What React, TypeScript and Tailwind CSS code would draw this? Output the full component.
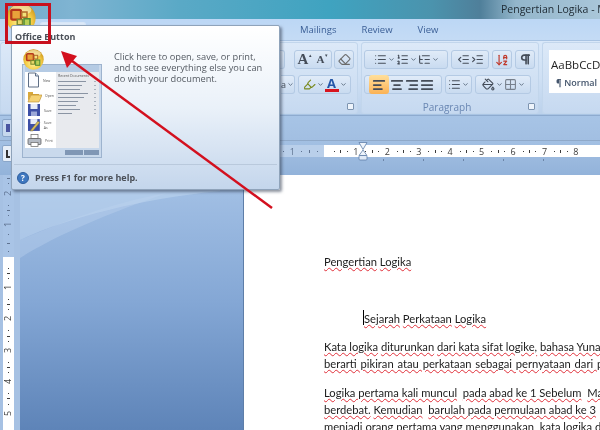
import {
  AlignCenter,
  AlignJustify,
  AlignLeft,
  AlignRight,
  ArrowDownAZ,
  ChevronDown,
  Eraser,
  Grid2x2,
  Highlighter,
  IndentDecrease,
  IndentIncrease,
  List,
  ListOrdered,
  ListTree,
  PaintBucket,
  Pilcrow,
} from "lucide-react";
import type { ReactNode } from "react";

const ui = "font-['Open_Sans',sans-serif]";

function Orb({ size }: { size: number }) {
  return (
    <svg width={size} height={size} viewBox="0 0 40 40">
      <defs>
        <radialGradient id="orbGold" cx="50%" cy="65%" r="65%">
          <stop offset="0%" stopColor="#fff7a8" />
          <stop offset="55%" stopColor="#f6cf4a" />
          <stop offset="100%" stopColor="#c98f14" />
        </radialGradient>
      </defs>
      <circle cx="20" cy="20" r="19.5" fill="url(#orbGold)" />
      <ellipse cx="20" cy="9" rx="14" ry="7" fill="#fffbe0" opacity="0.55" />
      <rect x="7" y="9" width="13" height="13" rx="2" fill="#e8a33a" stroke="#b5371c" strokeWidth="3" />
      <rect x="21" y="12" width="7" height="7" fill="#f3e27a" stroke="#b26a2a" strokeWidth="2" />
      <rect x="15" y="22" width="7" height="7" fill="#e9d76a" stroke="#7d8a2c" strokeWidth="2" />
      <rect x="24" y="21" width="8" height="10" fill="#b9cf55" stroke="#4f8a34" strokeWidth="2" />
    </svg>
  );
}

function Btn({ children, className = "" }: { children?: ReactNode; className?: string }) {
  return (
    <div
      className={`flex h-[19px] items-center justify-center gap-px rounded-[3px] border border-[#b4cae4] bg-gradient-to-b from-[#e0ebf8] to-[#c9dbf0] text-[#444c58] ${className}`}
    >
      {children}
    </div>
  );
}

function Caret() {
  return <ChevronDown size={7} strokeWidth={3} className="text-[#5a6a7e]" />;
}

function Launcher() {
  return <div className="h-[7px] w-[7px] rounded-[1px] border border-[#7d94b0] bg-[#eef4fb]" />;
}

function RulerUnit({ digit, muted }: { digit: number; muted?: boolean }) {
  return (
    <div
      className={`flex w-[31.45px] shrink-0 items-center justify-between pl-[7px] text-[9px] leading-none ${
        muted ? "text-[#5f7391]" : "text-[#3c3c3c]"
      }`}
    >
      <span className="h-px w-px bg-current" />
      <span className="h-[3px] w-px bg-current" />
      <span className="h-px w-px bg-current" />
      <span>{digit}</span>
    </div>
  );
}

function VRulerUnit({ digit, muted }: { digit: number; muted?: boolean }) {
  return (
    <div
      className={`flex h-[31.45px] shrink-0 flex-col items-center justify-between pt-[7px] text-[9px] leading-none ${
        muted ? "text-[#5f7391]" : "text-[#3c3c3c]"
      }`}
    >
      <span className="h-px w-px bg-current" />
      <span className="h-px w-[3px] bg-current" />
      <span className="h-px w-px bg-current" />
      <span className="-rotate-90">{digit}</span>
    </div>
  );
}

function Thumb() {
  const items: [string, ReactNode][] = [
    [
      "New",
      <svg key="n" width="13" height="16" viewBox="0 0 13 16">
        <path d="M1.5 1h7l3 3v11h-10z" fill="#fbfcff" stroke="#5f6f86" />
        <path d="M8.5 1v3h3" fill="#d7e1ef" stroke="#5f6f86" />
      </svg>,
    ],
    [
      "Open",
      <svg key="o" width="15" height="14" viewBox="0 0 15 14">
        <path d="M1 3h5l1 1h5v2H4L1 12z" fill="#d9a93c" />
        <path d="M4 6h11l-3 7H1z" fill="#f5d274" stroke="#b98a2a" strokeWidth="0.6" />
        <path d="M6 1h6v4H6z" fill="#ffffff" />
      </svg>,
    ],
    [
      "Save",
      <svg key="s" width="14" height="14" viewBox="0 0 14 14">
        <rect x="1" y="1" width="12" height="12" fill="#3d4fa6" />
        <rect x="3.5" y="1" width="7" height="5" fill="#e7ecf8" />
        <rect x="4" y="8.5" width="6" height="4.5" fill="#9ca8d8" />
      </svg>,
    ],
    [
      "Save As",
      <svg key="a" width="14" height="14" viewBox="0 0 14 14">
        <rect x="1" y="1" width="12" height="12" fill="#3d4fa6" />
        <rect x="3.5" y="1" width="7" height="5" fill="#e7ecf8" />
        <path d="M3 13 11 3l2 1.5L6 13z" fill="#d9bd55" stroke="#5c5c5c" strokeWidth="0.5" />
      </svg>,
    ],
    [
      "Print",
      <svg key="p" width="15" height="15" viewBox="0 0 15 14">
        <rect x="4" y="1" width="7" height="4" fill="#fff" stroke="#666" strokeWidth="0.7" />
        <rect x="1" y="5" width="13" height="6" rx="1" fill="#b5bbc4" stroke="#555" strokeWidth="0.7" />
        <rect x="4" y="9" width="7" height="4" fill="#fff" stroke="#666" strokeWidth="0.7" />
      </svg>,
    ],
  ];
  return (
    <div className="flex h-[94px] w-[80px] flex-col border border-[#9db3ce] bg-[#c9d9ec] px-[2px] pb-[2px]">
      <div className="h-[7px] shrink-0 bg-[#b5cbe4]" />
      <div className="flex flex-1 bg-white">
        <div className="flex w-[31px] flex-col justify-around pl-[2px]">
          {items.map(([label, icon]) => (
            <div key={label} className="flex items-center gap-[3px]">
              {icon}
              <span className="text-[3.5px] text-[#555]">{label}</span>
            </div>
          ))}
        </div>
        <div className="flex flex-1 flex-col gap-[2px] bg-[#e8eaee] px-[2px] pt-[2px]">
          <span className="text-[3.5px] leading-[4px] text-[#555]">Recent Documents</span>
          {[36, 32, 30, 38, 34, 28, 26, 30, 22].map((w, i) => (
            <div key={i} className="flex h-[2px] items-center justify-between pr-[1px]">
              <div className="h-px bg-[#8a94a3]" style={{ width: w - 8 }} />
              <div className="h-px w-[2px] bg-[#aab2bd]" />
            </div>
          ))}
        </div>
      </div>
      <div className="mt-[2px] flex h-[5px] shrink-0 justify-end gap-px">
        <div className="w-[18px] bg-[#8097b5]" />
        <div className="w-[15px] bg-[#8097b5]" />
      </div>
    </div>
  );
}

function Spell({ children }: { children: ReactNode }) {
  return (
    <span className="underline decoration-[#e0303a] decoration-wavy decoration-1 underline-offset-1">
      {children}
    </span>
  );
}

export default function App() {
  return (
    <div className={`relative h-[430px] w-[600px] overflow-hidden bg-white blur-[0.35px] ${ui}`}>
      {/* title bar */}
      <div className="flex h-[19px] items-center justify-end bg-[linear-gradient(90deg,#6fa6c9_0%,#7fb4d2_12%,#5aa9c6_30%,#3fa3c0_55%,#4b93ad_72%,#4f7f9a_80%,#93b6cb_86%,#a9c6d9_100%)] text-[10.5px] text-[#1e2a33]">
        <span className="w-[99px] shrink-0 overflow-hidden whitespace-nowrap">Pengertian Logika - Microsoft</span>
      </div>

      {/* tabs */}
      <div className="flex h-[21px] items-end bg-gradient-to-b from-[#bcd7f5] to-[#c4dbf5] pl-[40px] text-[9.5px] leading-none text-[#3b5f96]">
        <div className="h-[18px] w-[46px] rounded-t-[3px] border border-b-0 border-[#d7e6f7] bg-[#dce9f8]" />
        <div className="flex h-full items-center gap-[25px] pl-[214px]">
          <span>Mailings</span>
          <span>Review</span>
          <span>View</span>
        </div>
      </div>

      {/* ribbon */}
      <div className="flex h-[75px] gap-[3px] border-y border-[#a9c4e3] bg-gradient-to-b from-[#d9e8f9] via-[#cfe0f4] to-[#bcd2ec] pt-[1px] text-[#444c58]">
        <div className="flex w-[358px] shrink-0 flex-col rounded-[3px] border border-[#c2d6ec] bg-gradient-to-b from-[#dce9f8] to-[#c6d9f0]">
          <div className="flex h-[55px] flex-col items-end gap-[6px] pt-[7px]">
            <div className="flex items-center gap-[2px] pr-[3px]">
              <Btn className="mr-[7px] w-[5px] rounded-l-none border-l-0 bg-white" />
              <Btn className="w-[38px] gap-[2px]">
                <span className="font-['Liberation_Serif',serif] text-[15px] font-bold leading-none">A</span>
                <span className="-mt-[8px] text-[5px]">▴</span>
                <span className="ml-[3px] font-['Liberation_Serif',serif] text-[11px] font-bold leading-none">A</span>
                <span className="-mt-[8px] text-[5px]">▾</span>
              </Btn>
              <Btn className="w-[20px]">
                <Eraser size={13} className="text-[#6b6b6b]" />
              </Btn>
            </div>
            <div className="flex items-center gap-[3px] pr-[6px]">
              <Btn className="w-[14px] rounded-l-none border-l-0 text-[9px]">
                <span>a</span>
                <Caret />
              </Btn>
              <Btn className="w-[53px] justify-around">
                <Highlighter size={13} className="text-[#7a8a1e]" />
                <Caret />
                <span className="flex flex-col items-center text-[13px] font-bold leading-[12px] text-[#2456a8]">
                  A<span className="h-[3px] w-[14px] bg-[#d8141e]" />
                </span>
                <Caret />
              </Btn>
            </div>
          </div>
          <div className="flex flex-1 items-center justify-end pr-[3px] pt-[2px]">
            <Launcher />
          </div>
        </div>

        <div className="flex w-[178px] shrink-0 flex-col rounded-[3px] border border-[#c2d6ec] bg-gradient-to-b from-[#dce9f8] to-[#c6d9f0]">
          <div className="flex h-[55px] flex-col gap-[6px] pl-[2px] pt-[7px]">
            <div className="flex gap-[3px]">
              <Btn className="w-[84px] justify-around">
                <List size={13} />
                <Caret />
                <ListOrdered size={13} />
                <Caret />
                <ListTree size={13} />
                <Caret />
              </Btn>
              <Btn className="w-[38px] justify-around">
                <IndentDecrease size={13} />
                <IndentIncrease size={13} />
              </Btn>
              <Btn className="w-[20px]">
                <ArrowDownAZ size={14} className="text-[#c0392b]" />
              </Btn>
              <Btn className="w-[20px]">
                <Pilcrow size={13} strokeWidth={3} />
              </Btn>
            </div>
            <div className="flex gap-[3px]">
              <Btn className="w-[78px] justify-between">
                <span className="flex h-[19px] w-[20px] items-center justify-center rounded-[3px] bg-gradient-to-b from-[#ffdf9a] to-[#fbb254]">
                  <AlignLeft size={14} strokeWidth={3} />
                </span>
                <AlignCenter size={14} strokeWidth={3} />
                <AlignRight size={14} strokeWidth={3} />
                <span className="pr-[3px]">
                  <AlignJustify size={14} strokeWidth={3} />
                </span>
              </Btn>
              <Btn className="w-[27px]">
                <List size={13} />
                <Caret />
              </Btn>
              <Btn className="w-[56px] justify-around">
                <PaintBucket size={13} />
                <Caret />
                <Grid2x2 size={13} className="text-[#77808c]" />
                <Caret />
              </Btn>
            </div>
          </div>
          <div className="flex flex-1 items-center pr-[3px] pt-[2px] text-[10px] leading-none text-[#6a87b3]">
            <span className="flex-1 pl-[4px] text-center">Paragraph</span>
            <Launcher />
          </div>
        </div>

        <div className="min-w-0 flex-1 rounded-l-[3px] border border-r-0 border-[#c2d6ec] bg-gradient-to-b from-[#dce9f8] to-[#c6d9f0] pl-[6px] pt-[7px]">
          <div className="h-[43px] overflow-hidden whitespace-nowrap bg-white pl-[2px] pt-[8px] text-[11.5px] leading-[14px] text-[#1f1f1f]">
            AaBbCcDc
            <div className="mt-[5px] pl-[5px] text-[9px] font-semibold leading-[12px] text-[#44556c]">¶ Normal</div>
          </div>
        </div>
      </div>

      {/* strip under ribbon */}
      <div className="flex h-[25px] items-center border-t border-[#8eabcf] bg-gradient-to-b from-[#a7c4e6] to-[#a2bfe2] pl-[2px]">
        <div className="flex h-[18px] w-[12px] items-center justify-center rounded-[2px] border border-[#8aa6c9] bg-[#c6d8ee]">
          <span className="h-[8px] w-[4px] bg-[#4a55a0]" />
        </div>
      </div>

      {/* ruler row */}
      <div className="flex h-[35px] border-t border-[#8fa9c9] bg-gradient-to-b from-[#a3c0e3] to-[#93b3da] pl-[2px] pt-[4px]">
        <div className="flex h-[17px] w-[12px] items-center justify-center rounded-[2px] border border-[#8aa6c9] bg-[#e6eef8]">
          <span className="h-[8px] w-[4px] border-b-2 border-l-2 border-[#333]" />
        </div>
        <div className="ml-[247px] flex min-w-0 flex-1 flex-col">
          <div className="flex h-[12px] overflow-hidden bg-white">
            <div className="flex w-[63px] shrink-0 justify-end bg-[#b9cfea]">
              <RulerUnit digit={1} muted />
              <div className="flex w-[29px] shrink-0 items-center justify-between px-[6px] text-[#5f7391]">
                <span className="h-px w-px bg-current" />
                <span className="h-[3px] w-px bg-current" />
                <span className="h-px w-px bg-current" />
              </div>
            </div>
            <div className="w-[3px] shrink-0" />
            {[1, 2, 3, 4, 5, 6, 7, 8].map((d) => (
              <RulerUnit key={d} digit={d} />
            ))}
          </div>
          <div className="flex gap-[39px] pl-[122px] pt-[2px]">
            {[0, 1, 2, 3, 4].map((i) => (
              <span key={i} className="h-[2px] w-px shrink-0 bg-[#6b84a6]" />
            ))}
          </div>
        </div>
      </div>

      {/* work area */}
      <div className="flex h-[255px]">
        <div className="flex w-[20px] shrink-0 justify-center bg-[#a6c1e3] pr-[4px]">
          <div className="flex h-[255px] w-[11px] flex-col overflow-hidden bg-white">
            <div className="flex h-[82px] shrink-0 flex-col justify-end bg-[#a9c4e6]">
              <VRulerUnit digit={2} muted />
              <VRulerUnit digit={1} muted />
              <div className="flex h-[28px] shrink-0 flex-col items-center justify-between py-[5px] text-[#5f7391]">
                <span className="h-px w-px bg-current" />
                <span className="h-px w-[3px] bg-current" />
                <span className="h-px w-px bg-current" />
              </div>
            </div>
            <div className="h-[3.5px] shrink-0" />
            {[1, 2, 3, 4, 5].map((d) => (
              <VRulerUnit key={d} digit={d} />
            ))}
          </div>
        </div>

        <div className="relative w-[224px] shrink-0 border-r border-[#5e7ea8] bg-gradient-to-b from-[#a5c2e6] via-[#84a7d5] to-[#5e84b8]">
          <svg className="absolute left-0 top-0 h-[90px] w-[200px]" viewBox="0 0 200 90">
            <path d="M0 83C40 58 90 38 147 18 90 28 40 48 0 65Z" fill="#c3d8f0" opacity="0.35" />
            <path d="M0 0h200v16C120 24 50 42 0 65Z" fill="#bcd3ee" opacity="0.6" />
          </svg>
        </div>

        <div className="min-w-0 flex-1 overflow-hidden whitespace-nowrap bg-white pl-[80px] pt-[78px] font-['Lato',sans-serif] text-[11.2px] leading-[17px] text-[#1c1c1c]">
          <p>
            <Spell>Pengertian</Spell> <Spell>Logika</Spell>
          </p>
          <p className="relative mt-[40px] pl-[40px]">
            <span className="absolute left-[39px] top-0 h-[15px] w-px bg-black" />
            <Spell>Sejarah</Spell> <Spell>Perkataan</Spell> <Spell>Logika</Spell>
          </p>
          <p className="mt-[11px]">
            <Spell>Kata logika</Spell> <Spell>diturunkan</Spell> <Spell>dari kata sifat logike,</Spell>{" "}
            <Spell>bahasa Yunani</Spell>
          </p>
          <p className="[word-spacing:1px]">
            <Spell>berarti pikiran atau perkataan sebagai pernyataan dari pikiran</Spell>
          </p>
          <p className="mt-[12px]">
            <Spell>Logika pertama kali muncul</Spell>
            {"\u00a0 "}
            <Spell>pada abad ke 1 Sebelum</Spell>
            {"\u00a0 "}
            <Spell>Masehi</Spell>
          </p>
          <p>
            <Spell>berdebat.</Spell> <Spell>Kemudian</Spell>
            {"\u00a0 "}
            <Spell>barulah pada permulaan abad ke 3</Spell>
          </p>
          <p>
            <Spell>menjadi orang pertama yang menggunakan</Spell>
            {"\u00a0 "}
            <Spell>kata logika dalam</Spell>
          </p>
        </div>
      </div>

      {/* orb behind the tooltip */}
      <div className="absolute left-[6px] top-[3px]">
        <Orb size={30} />
      </div>

      {/* indent marker on the ruler */}
      <svg className="absolute left-[358px] top-[142px]" width="10" height="19" viewBox="0 0 10 19">
        <path d="M1 .5h8L5 7.5ZM5 8 1 13.5h8Z" fill="#eef4fb" stroke="#5f7fa8" strokeWidth="0.8" />
        <rect x="1" y="13.5" width="8" height="4.5" rx="1" fill="#dfe9f6" stroke="#5f7fa8" strokeWidth="0.8" />
      </svg>

      {/* tooltip */}
      <div className="absolute left-[11px] top-[25px] flex h-[165px] w-[269px] flex-col rounded-[2px] border border-[#8fa3ba] bg-gradient-to-b from-white via-[#eaf1f9] to-[#c4d6ec] shadow-[2px_2px_3px_rgba(50,60,80,0.55)]">
        <div className="pl-[3px] pt-[2px] text-[9px] font-bold leading-[17px] text-[#4a4f57]">Office Button</div>
        <div className="flex flex-1 pl-[10px] pt-[19px]">
          <div className="relative w-[91px] shrink-0">
            <Thumb />
            <div className="absolute -top-[15px] left-[1px]">
              <Orb size={21} />
            </div>
          </div>
          <p className="-mt-[13px] pl-[1px] text-[9.25px] leading-[11px] text-[#555b63]">
            Click here to open, save, or print,
            <br />
            and to see everything else you can
            <br />
            do with your document.
          </p>
        </div>
        <div className="mx-[2px] border-t border-[#b9c9dc]" />
        <div className="flex h-[24px] items-center gap-[6px] pl-[5px] pt-[1px] text-[9px] font-bold text-[#4a4f57]">
          <span className="flex h-[12px] w-[12px] items-center justify-center rounded-full border border-[#2f5f9f] bg-[#3f78c0] text-[8px] leading-none text-white">
            ?
          </span>
          Press F1 for more help.
        </div>
      </div>

      {/* annotation */}
      <div className="absolute left-[5px] top-[3px] h-[41px] w-[46px] border-[3px] border-[#c8101e]" />
      <svg className="absolute left-0 top-0" width="600" height="430" viewBox="0 0 600 430">
        <line x1="272" y1="208" x2="68" y2="58" stroke="#d3101e" strokeWidth="2.5" />
        <path d="M61 51 77 56 67 68Z" fill="#d3101e" />
      </svg>
    </div>
  );
}
